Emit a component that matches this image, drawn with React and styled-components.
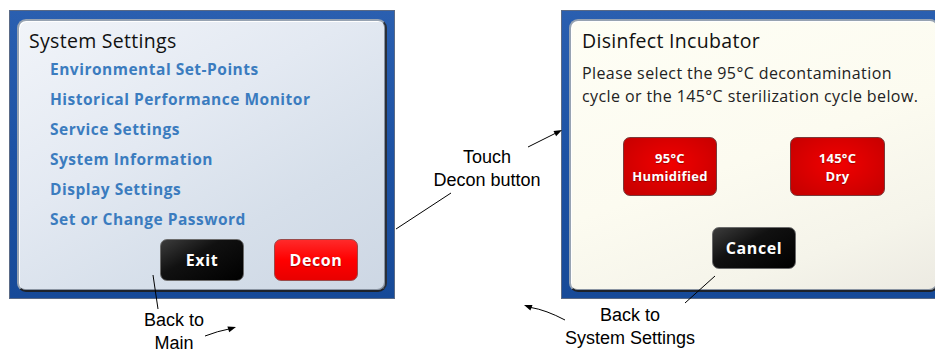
import React from "react";
import styled, { createGlobalStyle, css } from "styled-components";

const Global = createGlobalStyle`
  html, body { margin: 0; padding: 0; background: #ffffff; }
  body { width: 935px; height: 350px; overflow: hidden; }
`;

const Page = styled.div`
  position: relative;
  width: 935px;
  height: 350px;
  overflow: hidden;
  padding: 10px 0 0 9px;
  box-sizing: border-box;
  background: #fff;
`;

const TopRow = styled.div`
  display: flex;
  align-items: flex-start;
`;

const Screen = styled.div`
  flex: none;
  width: 386px;
  height: 289px;
  box-sizing: border-box;
  padding: 8px 7px 6px 7px;
  border: 1px solid #5a6a86;
  background: linear-gradient(180deg, #2a5fb0 0%, #1d52a4 50%, #174a98 100%);
`;

const Panel = styled.div`
  height: 100%;
  box-sizing: border-box;
  border-radius: 9px;
  border: 2px solid;
  border-color: #97a3b2 #2a2f38 #1e2229 #97a3b2;
  box-shadow: inset 1px 1px 0 #ffffff, inset -1px -1px 0 #8a94a2;
  font-family: "Open Sans", "Noto Sans", sans-serif;
  display: flex;
  flex-direction: column;
  padding: 8px 0 0 ${(p) => p.$pl}px;
  ${(p) =>
    p.$tone === "blue"
      ? css`
          background: linear-gradient(150deg, #f1f4f9 0%, #e3e9f2 40%, #d6dfea 70%, #cdd7e4 100%);
        `
      : css`
          background: linear-gradient(160deg, #fefef5 0%, #fcfbf0 50%, #f5f4ea 80%, #eceae2 100%);
        `}
`;

const Title = styled.div`
  font-size: 19.5px;
  line-height: 24px;
  font-weight: 500;
  color: #111;
  letter-spacing: 0.3px;
`;

const Menu = styled.div`
  display: flex;
  flex-direction: column;
  margin: 1px 0 0 21px;
`;

const MenuItem = styled.div`
  font-size: 15.5px;
  line-height: 30px;
  font-weight: 700;
  color: #3b7cbf;
  letter-spacing: 0.5px;
`;

const ButtonRow = styled.div`
  display: flex;
  justify-content: ${(p) => p.$justify || "flex-end"};
  gap: ${(p) => p.$gap}px;
  margin: ${(p) => p.$mt}px ${(p) => p.$mr || 0}px 0 0;
`;

const Btn = styled.div`
  flex: none;
  width: ${(p) => p.$w}px;
  height: ${(p) => p.$h}px;
  box-sizing: border-box;
  border-radius: 7px;
  display: flex;
  flex-direction: column;
  align-items: center;
  justify-content: center;
  color: #fff;
  font-weight: 700;
  font-size: ${(p) => p.$fs}px;
  line-height: ${(p) => p.$lh || 20}px;
  letter-spacing: ${(p) => p.$ls || 0.6}px;
  text-align: center;
  text-shadow: 0 1px 1px rgba(0, 0, 0, 0.35);
  ${(p) =>
    p.$kind === "black" &&
    css`
      border: 1px solid #6b6b6b;
      background: linear-gradient(150deg, #3c3c3c 0%, #111 40%, #000 100%);
    `}
  ${(p) =>
    p.$kind === "red" &&
    css`
      border: 1px solid #9b4a4a;
      background: linear-gradient(180deg, #ff2a2a 0%, #ff0000 50%, #e80000 100%);
    `}
  ${(p) =>
    p.$kind === "deep" &&
    css`
      border: 1px solid #7a3a3a;
      background: radial-gradient(ellipse at 50% 45%, #f20000 0%, #d80000 55%, #c20000 100%);
    `}
`;

const Body = styled.div`
  font-size: 16px;
  line-height: 23px;
  color: #222;
  letter-spacing: 0.4px;
  margin-top: 9px;
`;

const Middle = styled.div`
  flex: none;
  width: 166px;
  box-sizing: border-box;
  padding: 136px 0 0 18px;
  display: flex;
  justify-content: center;
`;

const Note = styled.div`
  flex: none;
  font-family: "Liberation Sans", Arial, sans-serif;
  font-size: 18px;
  line-height: 23px;
  color: #000;
  text-align: center;
  width: ${(p) => p.$w}px;
  margin: ${(p) => p.$mt || 0}px 0 0 ${(p) => p.$ml || 0}px;
`;

const BottomRow = styled.div`
  display: flex;
  align-items: flex-start;
`;

const Overlay = styled.svg`
  position: absolute;
  left: 0;
  top: 0;
  pointer-events: none;
`;

const menu = [
  "Environmental Set-Points",
  "Historical Performance Monitor",
  "Service Settings",
  "System Information",
  "Display Settings",
  "Set or Change Password",
];

export default function App() {
  return (
    <Page>
      <Global />
      <TopRow>
        <Screen>
          <Panel $tone="blue" $pl={10}>
            <Title>System Settings</Title>
            <Menu>
              {menu.map((m) => (
                <MenuItem key={m}>{m}</MenuItem>
              ))}
            </Menu>
            <ButtonRow $gap={30} $mt={5} $mr={27}>
              <Btn $kind="black" $w={84} $h={42} $fs={16}>Exit</Btn>
              <Btn $kind="red" $w={84} $h={42} $fs={16}>Decon</Btn>
            </ButtonRow>
          </Panel>
        </Screen>
        <Middle>
          <Note $w={140}>
            Touch
            <br />
            Decon button
          </Note>
        </Middle>
        <Screen>
          <Panel $tone="cream" $pl={11}>
            <Title>Disinfect Incubator</Title>
            <Body>
              Please select the 95°C decontamination
              <br />
              cycle or the 145°C sterilization cycle below.
            </Body>
            <ButtonRow $justify="center" $gap={73} $mt={29} $mr={11}>
              <Btn $kind="deep" $w={94} $h={59} $fs={13} $lh={18} $ls={0.3}>
                <span>95°C</span>
                <span>Humidified</span>
              </Btn>
              <Btn $kind="deep" $w={95} $h={59} $fs={13} $lh={18} $ls={0.3}>
                <span>145°C</span>
                <span>Dry</span>
              </Btn>
            </ButtonRow>
            <ButtonRow $justify="center" $gap={0} $mt={31} $mr={11}>
              <Btn $kind="black" $w={84} $h={42} $fs={16}>Cancel</Btn>
            </ButtonRow>
          </Panel>
        </Screen>
      </TopRow>
      <BottomRow>
        <Note $w={100} $ml={115} $mt={10}>
          Back to
          <br />
          Main
        </Note>
        <Note $w={140} $ml={336} $mt={5}>
          Back to
          <br />
          System Settings
        </Note>
      </BottomRow>
      <Overlay width="935" height="350" viewBox="0 0 935 350">
        <g stroke="#000" strokeWidth="1" fill="none">
          <line x1="396" y1="229" x2="451" y2="193" />
          <line x1="528" y1="147" x2="556" y2="133" />
          <path d="M565 320 Q546 310 531 307.5" />
          <path d="M205 336 Q218 331 229 329" />
          <line x1="153" y1="275" x2="158" y2="309" />
          <line x1="715" y1="276" x2="685" y2="303" />
        </g>
        <g fill="#000">
          <polygon points="562,130 556.1,136.3 553.5,130.9" />
          <polygon points="524,305 532.5,305 530.4,310.6" />
          <polygon points="236,327 229.2,332.2 227.4,326.4" />
        </g>
      </Overlay>
    </Page>
  );
}
